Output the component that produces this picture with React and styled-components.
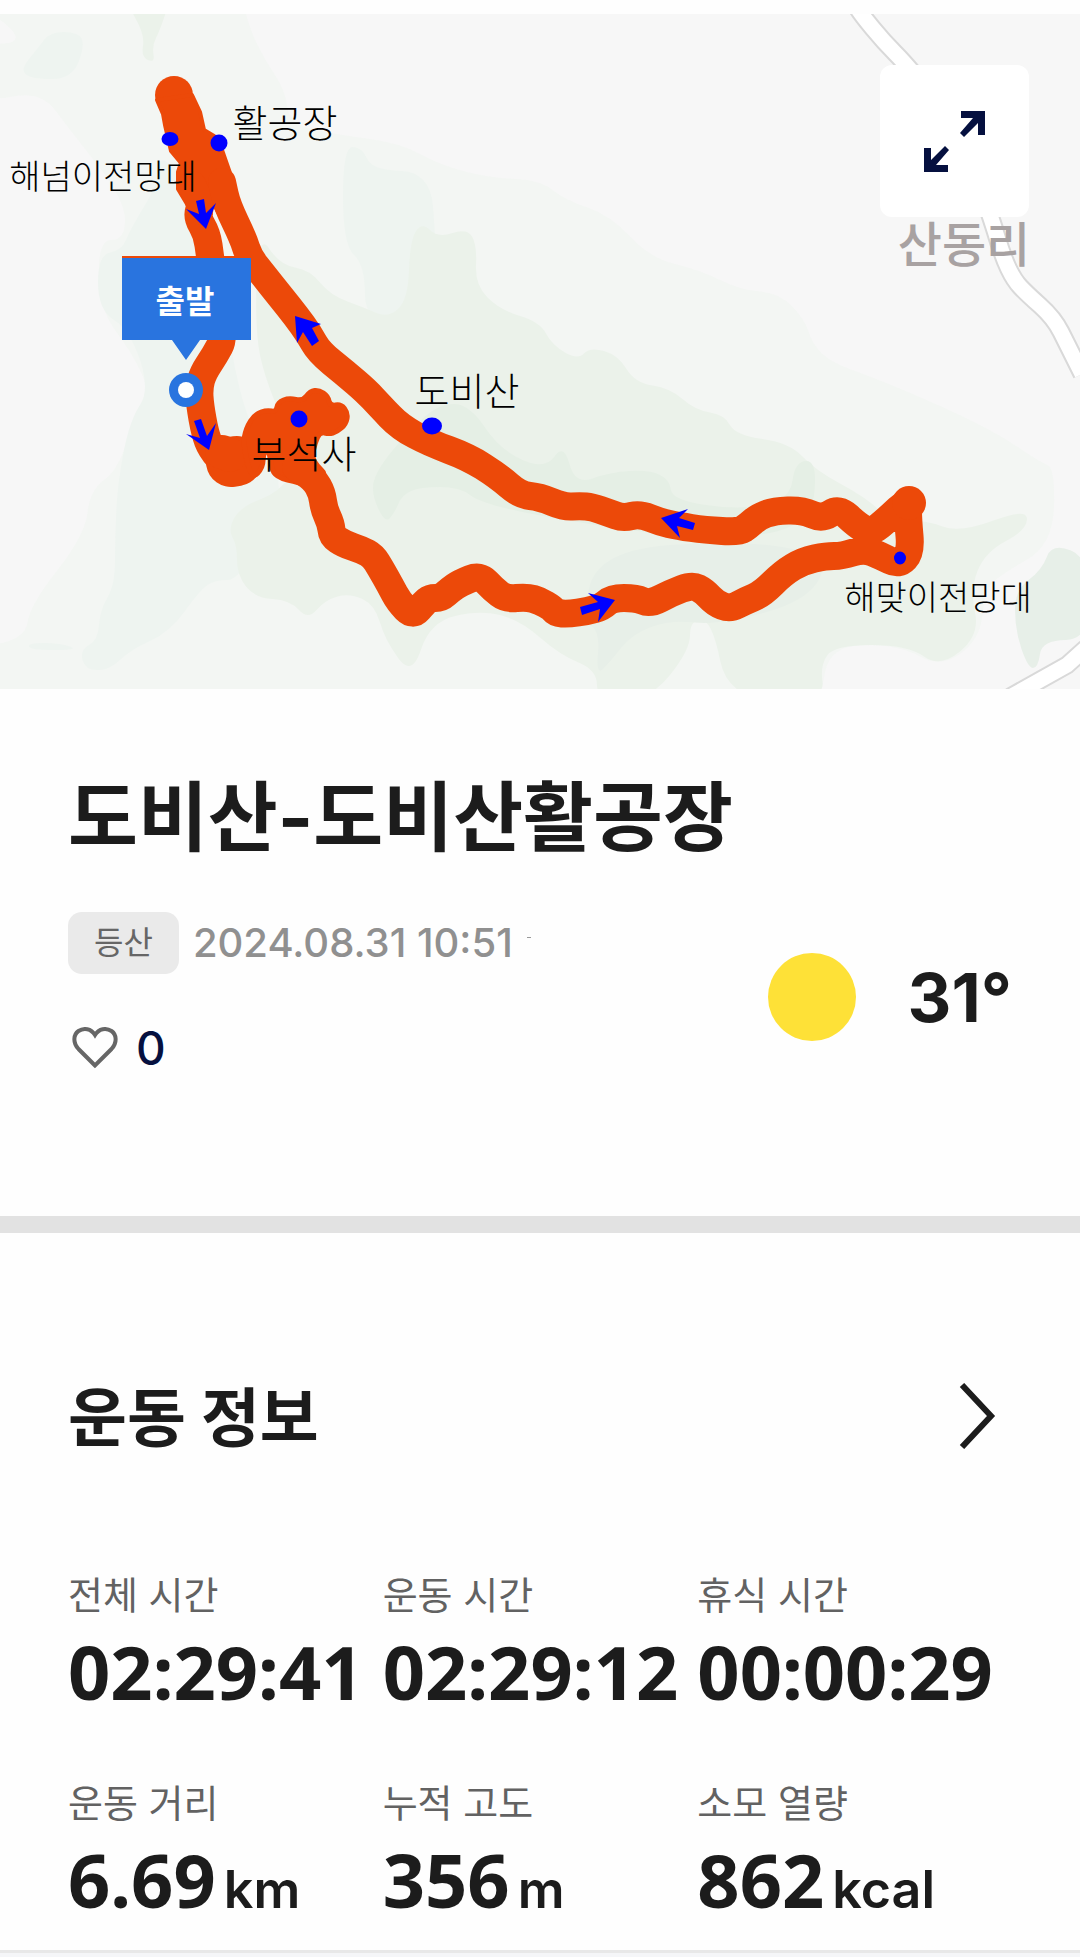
import React from "react";
import styled, { createGlobalStyle } from "styled-components";

const GlobalStyle = createGlobalStyle`
  * { box-sizing: border-box; }
  body {
    margin: 0;
    background: #fefefe;
    color: #1c1c1c;
    font-family: Inter, "Noto Sans CJK KR", sans-serif;
  }
  h1, h2, dl, dt, dd, p { margin: 0; }
  button {
    border: 0;
    padding: 0;
    background: none;
    font: inherit;
    color: inherit;
    cursor: pointer;
  }
`;

const Page = styled.main`
  padding-top: 14px;
`;

/* ---------- map ---------- */

const MapFrame = styled.section`
  position: relative;
  aspect-ratio: 8 / 5;
  overflow: hidden;
  background: #f7f7f7;
`;

const MapCanvas = styled.svg`
  display: block;
  width: 100%;
  height: 100%;
`;

const MapLabel = styled.span`
  position: absolute;
  left: ${(p) => (p.$x / 1080) * 100}%;
  top: ${(p) => (p.$y / 675) * 100}%;
  transform: translate(-50%, -50%);
  white-space: nowrap;
  line-height: 1;
  font-family: "Noto Sans CJK KR", sans-serif;
  font-size: ${(p) => p.$size || 38}px;
  font-weight: ${(p) => p.$weight || 300};
  color: ${(p) => p.$color || "#000"};
`;

const ExpandButton = styled.button`
  position: absolute;
  top: 51px;
  right: 51px;
  display: flex;
  align-items: center;
  justify-content: center;
  width: 149px;
  height: 152px;
  border-radius: 12px;
  background: #fff;
  color: #05103f;
`;

const labels = [
  { text: "활공장", x: 285, y: 107 },
  { text: "해넘이전망대", x: 103, y: 161, size: 34 },
  { text: "도비산", x: 467, y: 375 },
  { text: "부석사", x: 304, y: 438 },
  { text: "해맞이전망대", x: 938, y: 582, size: 34 },
  { text: "산동리", x: 964, y: 227, size: 48, weight: 500, color: "#a8a2a2" },
  { text: "출발", x: 185, y: 285, size: 32, weight: 700, color: "#fff" },
];

/* Rounds the corners of a polyline (M/L/H/V/Z commands) with quadratic curves. */
function smooth(d) {
  return d
    .split("M")
    .filter(Boolean)
    .map((part) => {
      const closed = part.includes("Z");
      const pts = [];
      for (const [, cmd, args] of ("L" + part).matchAll(/([LHV])([^LHVZ]+)/g)) {
        const n = args.trim().split(/[\s,]+/).map(Number);
        const last = pts[pts.length - 1];
        if (cmd === "H") pts.push([n[0], last[1]]);
        else if (cmd === "V") pts.push([last[0], n[0]]);
        else pts.push(n);
      }
      const mid = (a, b) => `${(a[0] + b[0]) / 2} ${(a[1] + b[1]) / 2}`;
      if (closed) {
        const end = mid(pts[pts.length - 1], pts[0]);
        const body = pts.map((p, i) => `Q${p.join(" ")} ${mid(p, pts[(i + 1) % pts.length])}`);
        return `M${end}${body.join("")}Z`;
      }
      const body = pts.slice(1, -1).map((p, i) => `Q${p.join(" ")} ${mid(p, pts[i + 2])}`);
      return `M${pts[0].join(" ")}L${mid(pts[0], pts[1])}${body.join("")}L${pts[pts.length - 1].join(" ")}`;
    })
    .join("");
}

const ROAD_EAST = smooth(
  "M855 4L861 14L884 42L907 65L960 130L991 217L1003 257L1014 280L1026 293L1054 318L1068 346L1082 374"
);
const ROAD_SOUTH = "M1010 697L1067 665L1086 648";

const terrain = [
  {
    fill: "#f3f6f3",
    d: "M-60 -20L240 -10L250 30L265 60L285 90L290 125L340 135L400 143L440 165L490 178L540 180L565 200L610 215L650 258L700 270L740 290L780 293L805 320L812 343L830 362L880 380L950 410L1000 435L1040 462L1055 468L1053 545L1000 575L985 590L980 640L940 668L900 645H830L820 700L800 760H-60L-40 650L25 640L30 605L85 535L90 490L118 470L135 415L150 390L130 350L100 310L98 240H125V200L70 130L40 90L-20 104L-30 45L35 42Z",
  },
  {
    fill: "#eef4f0",
    d: "M50 32H78L85 45L72 79H32L20 70L38 48ZM160 150V180L130 230L122 250L98 255V310L130 330L150 390L130 420L118 480L115 535V585L100 610L98 640L80 650L85 670H110L130 650L170 632L200 590L215 580H240L290 490L250 430L230 350L225 280L215 215ZM343 147H362L372 170L430 172L436 240V320L365 325V265L343 245ZM28 643H60L80 650H30Z",
  },
  {
    fill: "#ebf2ea",
    d: "M125 0H170L160 30L152 46L155 63L141 57L145 35ZM258 232L280 265L310 270L330 295L365 308L388 318L408 300L410 240L422 222L438 238L467 228L477 245L475 285L500 310L540 322L552 345L578 360L590 347L618 355L635 383L670 388L695 410L725 415L735 435L790 443L815 470L865 497L890 520L925 520L960 533L1027 508V530L985 552L970 590L980 635L940 668L908 645H835L820 665L825 700H728L712 620H690V650L650 700H597V670L560 655L520 620L480 610L430 622L412 677L385 640L375 605L350 593L325 600L308 620L290 600L255 598L237 575V545L228 530L240 507L280 492L300 460L265 380L255 330Z",
  },
  {
    fill: "#e5efe5",
    d: "M440 403L410 430L380 465L370 490L385 524L395 512L402 495L420 487H460L480 503L560 520L700 540L810 530L818 461H795L790 500L740 510L672 500L670 480L650 470L610 472L575 485L564 443L545 470L500 450L470 405Z",
  },
  {
    fill: "#e7efe8",
    d: "M600 550L740 540L830 555L810 600L720 625L670 620L632 634L610 662L596 676L600 630L580 620ZM1052 543L1090 558V640L1042 640L1038 668H1028L1015 630V590L1042 570Z",
  },
].map((t) => ({ ...t, d: smooth(t.d) }));

const Route = () => (
  <g fill="none" stroke="#ec4909" strokeLinecap="round" strokeLinejoin="round">
    <circle cx="174" cy="95" r="19" fill="#ec4909" stroke="none" />
    <path
      fill="#ec4909"
      strokeWidth="4"
      d="M157 100L192 95L200 112L204 130L214 136L222 150L230 173L236 200L220 216L209 194L203 182L211 214L200 222L187 204L178 189L178 172L181 163L171 151L165 125L163 114Z"
    />
    <path
      strokeWidth="28"
      d={smooth(
        "M192 185L201 204L197 217L207 234L210 256L216 300L224 338L215 355L203 373L199 388L200 405L205 433L211 449L226 466L245 462L262 432"
      )}
    />
    <path strokeWidth="50" d="M231 462L237 461" />
    <path strokeWidth="34" d="M222 452L230 455" />
    <path
      fill="#ec4909"
      strokeWidth="5"
      d={smooth(
        "M243 445L246 428L255 414L267 410L276 412L278 402L289 398L303 401L310 391L319 390L328 396L330 406L341 404L348 413L346 424L337 432L329 434L320 432L315 443L312 457L317 466L327 475L306 485L293 481L282 479L273 473L271 463L268 447L263 455L263 467L252 480Z"
      )}
    />
    <path
      strokeWidth="28"
      d={smooth(
        "M296 467L314 479L322 493L324 509L331 524L332 536L344 544L362 550L373 556L381 569L390 585L399 602L413 616L424 603L430 598L441 598L450 590L460 583L480 575L493 589L506 599L527 597L540 601L552 608L556 613L568 614L588 611L602 607L612 598L636 598L650 604L671 593L692 585L704 591L715 603L730 609L745 601L762 594L783 573L803 561L826 556L842 556L864 549L881 556L899 565L911 552L908 520L908 500L889 518L871 533L857 525L839 508L822 519L802 510L774 511L758 517L748 526L739 532L705 530L678 526L660 522L640 514L623 518L609 513L592 507L580 506L564 507L540 497L520 495L498 476L468 457L430 443L400 427L380 406L366 391L345 373L319 352L309 334L296 316L280 296L264 276L249 257L243 238L227 205L222 182"
      )}
    />
    <circle cx="909" cy="503" r="17" fill="#ec4909" stroke="none" />
  </g>
);

const Markers = () => (
  <g>
    <path fill="#ec4909" d="M122 256H251V259H122Z" />
    <path fill="#2974df" d="M122 258H251V340H200L186 360L172 340H122Z" />
    <circle cx="186" cy="390" r="17" fill="#2974df" />
    <circle cx="186" cy="390" r="8" fill="#fff" />
    <g fill="#0000ff">
      <ellipse cx="170" cy="139" rx="8.5" ry="7" />
      <circle cx="219" cy="143" r="8.5" />
      <circle cx="299" cy="419" r="8.5" />
      <ellipse cx="432" cy="426" rx="10" ry="8.5" />
      <ellipse cx="900" cy="558" rx="6" ry="6.5" />
      <path d="M196 201L204 199L206 213L216 203L206 229L186 209L199 214Z" />
      <path d="M295 316L321 324L312 328L319 341L312 346L303 332L297 343Z" />
      <path d="M194 421L201 419L207 436L216 423L209 450L186 434L200 438Z" />
      <path d="M661 518L688 509L679 518L695 523L693 530L677 526L680 538Z" />
      <path d="M615 600L588 593L598 602L580 607L582 615L600 609L598 622Z" />
    </g>
  </g>
);

const TrailMap = () => (
  <MapFrame aria-label="등산 경로 지도">
    <MapCanvas viewBox="0 14 1080 675" aria-hidden="true">
      {terrain.map((t) => (
        <path key={t.fill} fill={t.fill} d={t.d} />
      ))}
      <g fill="none">
        <path d={ROAD_EAST} stroke="#d9d9d9" strokeWidth="19" />
        <path d={ROAD_SOUTH} stroke="#d9d9d9" strokeWidth="19" />
        <path d={ROAD_EAST} stroke="#fff" strokeWidth="15" />
        <path d={ROAD_SOUTH} stroke="#fff" strokeWidth="15" />
      </g>
      <Route />
      <Markers />
    </MapCanvas>
    {labels.map((l) => (
      <MapLabel key={l.text} $x={l.x} $y={l.y} $size={l.size} $weight={l.weight} $color={l.color}>
        {l.text}
      </MapLabel>
    ))}
    <ExpandButton type="button" aria-label="지도 확대">
      <svg width="61" height="61" viewBox="0 0 61 61" fill="currentColor" aria-hidden="true">
        <path d="M37 0H61V24H54V12L40 26L36 22L49 7H37Z" />
        <path d="M24 61H0V37H7V49L21 35L25 39L12 54H24Z" />
      </svg>
    </ExpandButton>
  </MapFrame>
);

/* ---------- summary ---------- */

const Summary = styled.section`
  padding: 82px 68px 138px;
  border-bottom: 17px solid #e2e2e2;
`;

const Title = styled.h1`
  font-size: 76px;
  line-height: 92px;
  font-weight: 700;
`;

const SummaryBody = styled.div`
  display: flex;
  align-items: center;
  justify-content: space-between;
  margin-top: 49px;
`;

const Details = styled.div`
  display: flex;
  flex-direction: column;
  align-items: flex-start;
  gap: 44px;
`;

const Meta = styled.div`
  display: flex;
  align-items: center;
  gap: 14px;
`;

const Badge = styled.span`
  padding: 0 26px;
  border-radius: 14px;
  background: #eaeaea;
  color: #666;
  font-size: 32px;
  line-height: 62px;
`;

const DateText = styled.time`
  color: #909090;
  font-size: 40px;
  line-height: 62px;
  font-weight: 500;
`;

const Speck = styled.i`
  width: 4px;
  height: 1px;
  margin-bottom: 12px;
  background: #999;
`;

const LikeButton = styled.button`
  display: flex;
  align-items: center;
  gap: 18px;
  padding-left: 4px;
  color: #05103f;
  font-size: 46px;
  line-height: 60px;
  font-weight: 500;
`;

const Weather = styled.div`
  display: flex;
  align-items: center;
  gap: 52px;
  padding-top: 4px;
`;

const Sun = styled.span`
  width: 88px;
  height: 88px;
  border-radius: 50%;
  background: #fee137;
`;

const Temperature = styled.span`
  font-size: 68px;
  line-height: 80px;
  font-weight: 700;
`;

/* ---------- workout info ---------- */

const Workout = styled.section`
  padding: 145px 68px 30px;
  border-bottom: 3px solid #e8e8e8;
`;

const WorkoutHeader = styled.header`
  display: flex;
  align-items: center;
  justify-content: space-between;
`;

const WorkoutTitle = styled.h2`
  font-size: 64px;
  line-height: 80px;
  font-weight: 700;
`;

const MoreButton = styled.button`
  display: flex;
  padding: 0 16px 4px;
`;

const Stats = styled.dl`
  display: grid;
  grid-template-columns: repeat(3, 1fr);
  row-gap: 67px;
  margin-top: 113px;
`;

const Stat = styled.div`
  display: flex;
  flex-direction: column;
  gap: 13px;
`;

const StatLabel = styled.dt`
  color: #626262;
  font-size: 38px;
  line-height: 48px;
`;

const StatValue = styled.dd`
  display: flex;
  align-items: baseline;
  gap: 8px;
  white-space: nowrap;
  font-family: "Noto Sans", sans-serif;
  font-size: 74px;
  line-height: 80px;
  font-weight: 700;
`;

const Unit = styled.span`
  font-family: Inter, sans-serif;
  font-size: 52px;
  line-height: 52px;
  font-weight: 600;
`;

const NextPanel = styled.div`
  height: 4px;
  background: #f5f6f8;
`;

const stats = [
  { label: "전체 시간", value: "02:29:41" },
  { label: "운동 시간", value: "02:29:12" },
  { label: "휴식 시간", value: "00:00:29" },
  { label: "운동 거리", value: "6.69", unit: "km" },
  { label: "누적 고도", value: "356", unit: "m" },
  { label: "소모 열량", value: "862", unit: "kcal" },
];

export default function App() {
  return (
    <Page>
      <GlobalStyle />
      <TrailMap />
      <Summary>
        <Title>도비산-도비산활공장</Title>
        <SummaryBody>
          <Details>
            <Meta>
              <Badge>등산</Badge>
              <DateText dateTime="2024-08-31T10:51">2024.08.31 10:51</DateText>
              <Speck />
            </Meta>
            <LikeButton type="button" aria-label="좋아요 0">
              <svg width="46" height="42" viewBox="0 0 46 42" fill="none" stroke="#666" strokeWidth="4" aria-hidden="true">
                <path d="M23 38.500L6.500 22C0.500 15.500 1.500 7.500 6.500 4C12 0.500 19 1.500 23 8C27 1.500 34 0.500 39.500 4C44.500 7.500 45.500 15.500 39.500 22Z" />
              </svg>
              0
            </LikeButton>
          </Details>
          <Weather>
            <Sun role="img" aria-label="맑음" />
            <Temperature>31°</Temperature>
          </Weather>
        </SummaryBody>
      </Summary>
      <Workout>
        <WorkoutHeader>
          <WorkoutTitle>운동 정보</WorkoutTitle>
          <MoreButton type="button" aria-label="운동 정보 더보기">
            <svg width="38" height="66" viewBox="0 0 38 66" fill="none" stroke="#1c1c1c" strokeWidth="6" aria-hidden="true">
              <path d="M4 2L33 33L4 64" />
            </svg>
          </MoreButton>
        </WorkoutHeader>
        <Stats>
          {stats.map((s) => (
            <Stat key={s.label}>
              <StatLabel>{s.label}</StatLabel>
              <StatValue>
                {s.value}
                {s.unit && <Unit>{s.unit}</Unit>}
              </StatValue>
            </Stat>
          ))}
        </Stats>
      </Workout>
      <NextPanel />
    </Page>
  );
}
